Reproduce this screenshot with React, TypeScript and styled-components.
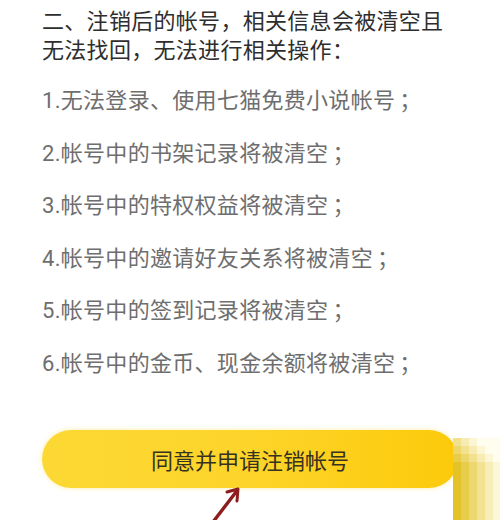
import React from "react";
import styled, { createGlobalStyle } from "styled-components";

const Global = createGlobalStyle`
  html, body { margin: 0; padding: 0; background: #ffffff; }
  body {
    font-family: "Roboto", "Noto Sans CJK SC", sans-serif;
    text-spacing-trim: space-all;
  }
`;

const Page = styled.div`
  position: relative;
  width: 500px;
  height: 520px;
  overflow: hidden;
  box-sizing: border-box;
  padding: 7px 0 0 42px;
  display: flex;
  flex-direction: column;
`;

const Heading = styled.div`
  font-size: 22px;
  line-height: 29px;
  color: #2e2e2e;
  width: 412px;
  letter-spacing: 0.3px;
`;

const List = styled.div`
  margin-top: 21px;
  display: flex;
  flex-direction: column;
  gap: 23.5px;
`;

const Item = styled.div`
  font-size: 22px;
  line-height: 29px;
  color: #6e6e6e;
  white-space: nowrap;
  letter-spacing: 0.3px;
`;

const Semi = styled.span`
  display: inline-block;
  width: 22px;
  text-align: center;
  margin-left: 4px;
`;

const Button = styled.div`
  margin-top: 52px;
  width: 416px;
  height: 58px;
  border-radius: 29px;
  background: linear-gradient(90deg, #fcd834 0%, #fdd42a 50%, #fcca0a 100%);
  box-shadow: 0 0 4px 1px rgba(253, 220, 80, 0.35);
  display: flex;
  align-items: center;
  justify-content: center;
  font-size: 22px;
  color: #35321f;
`;

const Arrow = styled.svg`
  position: absolute;
  left: 200px;
  top: 480px;
`;

const Mosaic = styled.div`
  position: absolute;
  left: 453px;
  top: 438px;
  display: grid;
  grid-template-columns: repeat(6, 8px);
  grid-auto-rows: 8px;
`;

const Cell = styled.div``;

const items = [
  "1.无法登录、使用七猫免费小说帐号",
  "2.帐号中的书架记录将被清空",
  "3.帐号中的特权权益将被清空",
  "4.帐号中的邀请好友关系将被清空",
  "5.帐号中的签到记录将被清空",
  "6.帐号中的金币、现金余额将被清空",
];

function mix(a: number[], b: number[], t: number) {
  const c = a.map((v, i) => Math.round(v + (b[i] - v) * t));
  return `rgb(${c[0]},${c[1]},${c[2]})`;
}

const gold = [226, 192, 30];
const cream = [255, 253, 238];

export default function App() {
  const cells: React.ReactNode[] = [];
  for (let r = 0; r < 11; r++) {
    for (let c = 0; c < 6; c++) {
      let t = 0.05 + c * 0.17 + Math.max(0, 3 - r) * 0.16;
      t = Math.min(1, Math.max(0, t));
      cells.push(<Cell key={`${r}-${c}`} style={{ background: mix(gold, cream, t) }} />);
    }
  }
  return (
    <>
      <Global />
      <Page>
        <Heading>二、注销后的帐号，相关信息会被清空且无法找回，无法进行相关操作：</Heading>
        <List>
          {items.map((t) => (
            <Item key={t}>
              {t}
              <Semi>；</Semi>
            </Item>
          ))}
        </List>
        <Button>同意并申请注销帐号</Button>
        <Mosaic>{cells}</Mosaic>
        <Arrow width="60" height="40" viewBox="0 0 60 40">
          <line x1="13" y1="42" x2="36" y2="12" stroke="#8e1d1d" strokeWidth="3.4" strokeLinecap="round" />
          <polyline points="27,12 38,9 37,21" fill="none" stroke="#8e1d1d" strokeWidth="3" strokeLinejoin="round" strokeLinecap="round" />
        </Arrow>
      </Page>
    </>
  );
}
